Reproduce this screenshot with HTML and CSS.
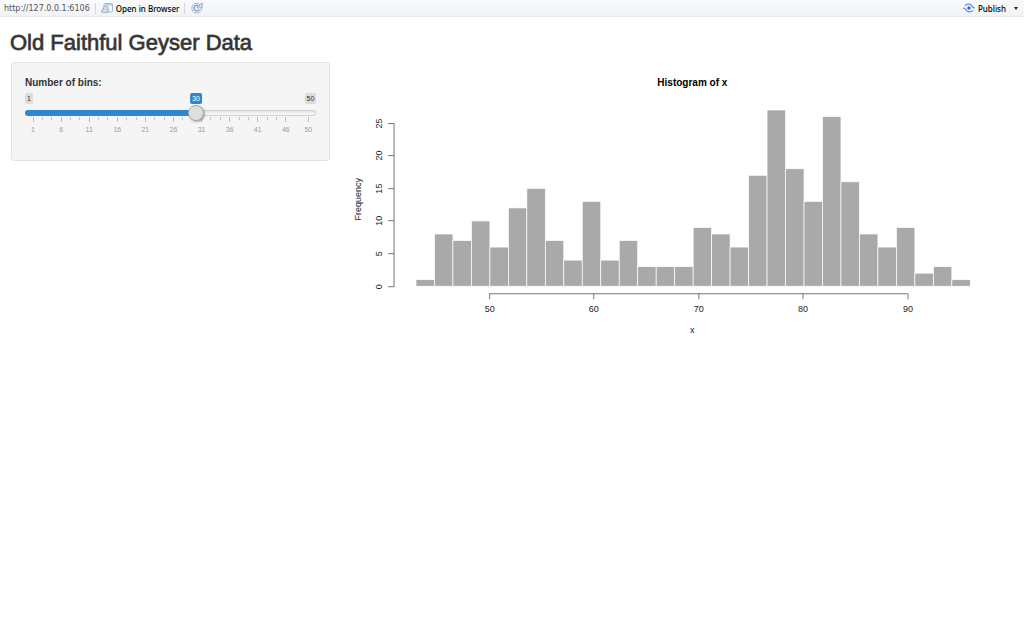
FILE: index.html
```html
<!DOCTYPE html>
<html lang="en">
<head>
    <meta charset="UTF-8">
    <title>Old Faithful Geyser Data</title>
    <link rel="stylesheet" href="styles.css">
</head>
<body>
    <div class="toolbar">
        <span class="url">http://127.0.0.1:6106</span>
        <span class="sep"></span>
        <button class="tool" type="button">
            <svg width="12" height="10" viewBox="0 0 12 10">
                <rect x="3" y="0.5" width="8.5" height="8.5" rx="1.2" fill="#f2f6fa" stroke="#a3b6cc"/>
                <path d="M3.5 1.8h7.5" stroke="#bccde0" stroke-width="1.4"/>
                <path d="M0.6 9.2L1.8 6H7.4L6.4 9.2z" fill="#e3ebf3" stroke="#8fa3bc" stroke-width="0.9"/>
                <path d="M2.4 6C2.4 3.6 4 2.6 6.2 3.2L7.2 5.8" fill="#d5e2f0" stroke="#8ba4c6" stroke-width="0.9"/>
            </svg>
            Open in Browser
        </button>
        <span class="sep"></span>
        <button class="tool" type="button" aria-label="Refresh">
            <svg width="14" height="12" viewBox="-1 0 14 12">
                <circle cx="5.7" cy="6.2" r="4.9" fill="#eef3f9" stroke="#a3b2cc"/>
                <path d="M8.3 7.6A2.8 2.8 0 1 1 7.6 4" fill="none" stroke="#8092b8" stroke-width="1.2"/>
                <path d="M6 5.8H11.2V0.8z" fill="#dfe8f4" stroke="#8b9dc2" stroke-width="0.8"/>
            </svg>
        </button>
        <button class="tool publish" type="button">
            <svg width="12" height="10" viewBox="0 0 12 10">
                <circle cx="6" cy="5" r="1.7" fill="#2c66d8"/>
                <path d="M1.9 2.6C4 0.4 8 0.6 9.3 3.4C9.8 4.6 10.6 4.9 11.8 4.9" fill="none" stroke="#5a8ce2" stroke-width="1.3"/>
                <path d="M10.1 7.4C8 9.6 4 9.4 2.7 6.6C2.2 5.4 1.4 5.1 0.2 5.1" fill="none" stroke="#5a8ce2" stroke-width="1.3"/>
            </svg>
            Publish
            <span class="caret"></span>
        </button>
    </div>

    <h2 class="title">Old Faithful Geyser Data</h2>

    <div class="row">
        <div class="sidebar">
            <form class="well">
                <label class="name" for="bins">Number of bins:</label>
                <div class="badges">
                    <span class="badge">1</span>
                    <span class="badge">50</span>
                    <div class="rail">
                        <output class="badge current" id="current" for="bins">30</output>
                    </div>
                </div>
                <input class="slider" id="bins" type="range" min="1" max="50" value="30">
                <div class="scale">
                    <svg class="ticks" id="ticks"></svg>
                </div>
            </form>
        </div>
        <div class="main">
            <svg class="plot" id="plot" viewBox="0 0 660 284" role="img" aria-label="Histogram of x"></svg>
        </div>
    </div>

    <script src="script.js"></script>
</body>
</html>
```
FILE: styles.css
```css
*{
    box-sizing: border-box;
}
body{
    margin: 0;
    background: #fff;
    color: #333;
    font-family: "Liberation Sans", Arial, sans-serif;
    font-size: 10px;
}
.toolbar{
    display: flex;
    align-items: center;
    gap: 5px;
    height: 17px;
    padding: 0 4px;
    background: linear-gradient(#fafbfc, #f0f3f5);
    border-bottom: 1px solid #e4e8eb;
}
.url{
    color: #555;
    font: 8px "DejaVu Sans", sans-serif;
}
.sep{
    width: 1px;
    height: 11px;
    background: #d5d9dd;
}
.tool{
    display: flex;
    align-items: center;
    gap: 3px;
    padding: 0;
    border: 0;
    background: none;
    color: #000;
    font: 500 8px "Noto Sans", sans-serif;
}
.publish{
    margin-left: auto;
}
.caret{
    margin: 0 2px 0 5px;
    border: 2px solid transparent;
    border-top: 3px solid #222;
    border-bottom: 0;
}
.title{
    margin: 14px 10px 7px;
    font-size: 22px;
    font-weight: normal;
    line-height: 24px;
    -webkit-text-stroke: 1px rgba(51,51,51,0.7);
}
.row{
    display: flex;
}
.sidebar{
    width: 33.333%;
    padding: 0 11px;
}
.main{
    flex: 1;
    padding: 0 11px;
}
.well{
    padding: 13px;
    background: #f5f5f5;
    border: 1px solid #e3e3e3;
    border-radius: 3px;
}
.name{
    display: block;
    margin-bottom: 3px;
    font-weight: bold;
    line-height: 14px;
}
.badges{
    display: flex;
    justify-content: space-between;
    position: relative;
    margin-bottom: 1px;
}
.badge{
    padding: 0 2px;
    border-radius: 2px;
    background: #dcdcdc;
    color: #333;
    font-size: 7px;
    line-height: 11px;
}
/* spans the distance the thumb's centre can travel */
.rail{
    position: absolute;
    top: 0;
    left: 8px;
    right: 8px;
    height: 11px;
}
.current{
    position: absolute;
    transform: translateX(-50%);
    background: #2d86cf;
    color: #fff;
}
.slider{
    -webkit-appearance: none;
    appearance: none;
    display: block;
    position: relative;
    z-index: 1;
    width: 100%;
    height: 16px;
    margin: 0;
    background: none;
}
.slider::-webkit-slider-runnable-track{
    height: 6px;
    border: 1px solid transparent;
    border-radius: 3px;
    background:
        linear-gradient(#2d86cf, #2d86cf) 0 0 / var(--fill, 59%) 100% no-repeat border-box,
        linear-gradient(#e6e6e6, #fafafa) padding-box,
        linear-gradient(#d0d0d0, #d0d0d0) border-box;
}
.slider::-webkit-slider-thumb{
    -webkit-appearance: none;
    width: 16px;
    height: 16px;
    margin-top: -6px;
    border: 1px solid #aaa;
    border-radius: 50%;
    background: #dedede;
    box-shadow: 1px 1px 2px rgba(0,0,0,0.3);
}
.scale{
    height: 30px;
    margin-top: -4px;
    padding: 0 8px;
}
.ticks{
    display: block;
    width: 100%;
    height: 18px;
    overflow: visible;
}
.ticks line{
    stroke: #c4c4c4;
    shape-rendering: crispEdges;
}
.ticks .major{
    stroke: #9fc5e4;
}
.ticks text{
    fill: #999;
    font-size: 7px;
    text-anchor: middle;
}
.plot{
    display: block;
    width: 100%;
}
.plot text{
    fill: #222;
    font-size: 9px;
    text-anchor: middle;
}
.plot .heading{
    fill: #000;
    font-size: 10px;
    font-weight: bold;
}
.plot rect{
    fill: #a9a9a9;
    stroke: #fff;
    stroke-width: 0.7;
}
.plot path{
    fill: none;
    stroke: #777;
}
```
FILE: script.js
```js
var counts = [1, 8, 7, 10, 6, 12, 15, 7, 4, 13, 4, 7, 3, 3, 3, 9, 8, 6, 17, 27, 18, 13, 26, 16, 8, 6, 9, 2, 3, 1];
var oBins = document.getElementById('bins');
var oCurrent = document.getElementById('current');

// slider scale
function drawTicks() {
    var html = '';
    var labels = [1, 6, 11, 16, 21, 26, 31, 36, 41, 46, 50];
    for (var i = 0; i < labels.length; i++) {
        var x = (labels[i] - 1) / 49 * 100;
        html += '<line class="major" x1="' + x + '%" x2="' + x + '%" y1="0" y2="5"/>';
        html += '<text x="' + x + '%" y="15">' + labels[i] + '</text>';
        for (var j = 1; j < 3 && i < labels.length - 2; j++) {
            var m = x + j * 5 / 3 / 49 * 100;
            html += '<line x1="' + m + '%" x2="' + m + '%" y1="0" y2="3"/>';
        }
    }
    document.getElementById('ticks').innerHTML = html;
}

// histogram
function drawPlot() {
    var left = 63.9, bottom = 224, width = 553.8, unit = 6.52;
    var bar = width / counts.length;
    var html = '<text class="heading" x="340" y="24">Histogram of x</text>';
    for (var i = 0; i < counts.length; i++) {
        var h = counts[i] * unit;
        html += '<rect x="' + (left + i * bar) + '" y="' + (bottom - h) + '" width="' + bar + '" height="' + h + '"/>';
    }
    html += '<path d="M42 61V224.5"/>';
    for (var y = 0; y <= 25; y += 5) {
        var py = Math.round(bottom - y * unit - 0.5) + 0.5;
        html += '<path d="M36 ' + py + 'H42"/>';
        html += '<text transform="translate(30 ' + py + ') rotate(-90)">' + y + '</text>';
    }
    var scale = width / 53;
    html += '<path d="M137 231.5H555"/>';
    for (var x = 50; x <= 90; x += 10) {
        var px = Math.round(left + (x - 43) * scale - 0.5) + 0.5;
        html += '<path d="M' + px + ' 231V237"/>';
        html += '<text x="' + px + '" y="250">' + x + '</text>';
    }
    html += '<text x="340" y="271">x</text>';
    html += '<text transform="translate(9 137) rotate(-90)">Frequency</text>';
    document.getElementById('plot').innerHTML = html;
}

function update() {
    var pos = (oBins.value - 1) / 49 * 100;
    oCurrent.value = oBins.value;
    oCurrent.style.left = pos + '%';
    oBins.style.setProperty('--fill', pos + '%');
}

oBins.oninput = update;

drawTicks();
drawPlot();
update();
```
